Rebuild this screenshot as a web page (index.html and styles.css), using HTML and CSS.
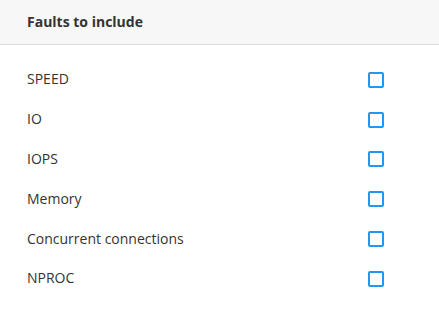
FILE: index.html
```html
<!DOCTYPE html>
<html lang="en">

<head>
    <title>Faults to include</title>
    <link rel="stylesheet" href="styles.css">
</head>

<body>
    <div class="panel">
        <div class="panel-header">
            <h3>Faults to include</h3>
        </div>
        <ul class="fault-list">
            <li class="fault-row"><span>SPEED</span><span class="check"></span></li>
            <li class="fault-row"><span>IO</span><span class="check"></span></li>
            <li class="fault-row"><span>IOPS</span><span class="check"></span></li>
            <li class="fault-row"><span>Memory</span><span class="check"></span></li>
            <li class="fault-row"><span>Concurrent connections</span><span class="check"></span></li>
            <li class="fault-row"><span>NPROC</span><span class="check"></span></li>
        </ul>
    </div>
</body>

</html>
```

FILE: styles.css
```css
* {
    margin: 0;
    padding: 0;
    box-sizing: border-box;
}

body {
    font-family: "Open Sans", sans-serif;
    font-size: 14px;
    color: #333;
    background: #fff;
}

.panel-header {
    height: 45px;
    display: flex;
    align-items: center;
    padding: 0 27px 2px;
    background-color: #f7f7f7;
    border-bottom: 1px solid #dcdcdc;
}

.panel-header h3 {
    font-size: 14px;
    font-weight: bold;
    color: #333;
}

.fault-list {
    list-style: none;
    padding: 14px 55px 0 27px;
}

.fault-row {
    height: 39.8px;
    display: flex;
    align-items: center;
    justify-content: space-between;
}

.check {
    width: 16px;
    height: 16px;
    margin-top: 2px;
    border: 2px solid #2196f3;
    border-radius: 2px;
}
```
